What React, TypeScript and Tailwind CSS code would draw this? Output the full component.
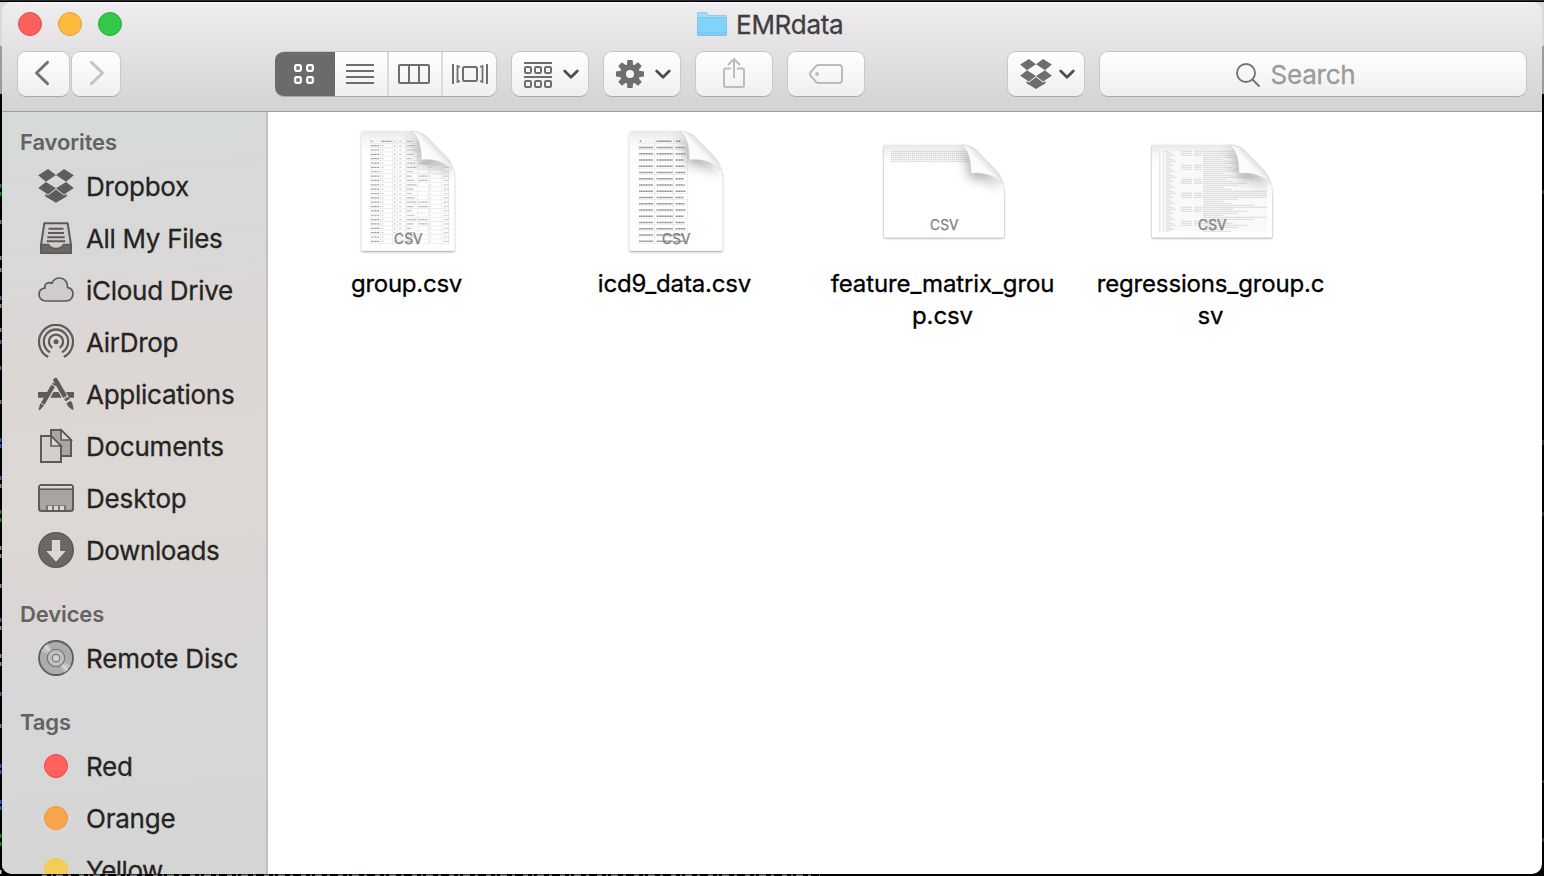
import type { ReactNode } from "react";

const INK = "#5f5a58";

function DropboxGlyph({ size, color }: { size: number; color: string }) {
  return (
    <svg width={size} height={size} viewBox="0 0 36 36" fill={color}>
      <path d="M.2 7.3 10 1l8 6.1-10.1 6.6zM35.8 7.3 26 1l-8 6.1 10.1 6.6zM.2 20.1l7.7-6.2L18 20.3l-8 6.2zM35.8 20.1l-7.7-6.2L18 20.3l8 6.2z" />
      <path d="M18 21.6l8 6 2.7-1.6v2.5L18 34.8 7.300 28.500V26l2.700 1.600z" />
    </svg>
  );
}

function Glyph({ children }: { children: ReactNode }) {
  return (
    <svg width="36" height="36" viewBox="0 0 36 36" fill="none">
      {children}
    </svg>
  );
}

const filesIcon = (
  <Glyph>
    <path d="M6.300 3.300h23.400l3.300 21.700v8H3v-8z" fill="#d0cecd" stroke={INK} strokeWidth="2" strokeLinejoin="round" />
    <path d="M3 24.500h7.500c.7 0 .8 4 7.500 4s6.800-4 7.500-4H33V33H3z" fill="#6d6866" stroke={INK} strokeWidth="1.500" />
    <path d="M10.500 8.800h15M10 13h16M9.300 17.200h17.400M8.700 21.300h18.600" stroke={INK} strokeWidth="2" />
  </Glyph>
);

const cloudIcon = (
  <Glyph>
    <path
      d="M8 29C3.800 29 1 26.200 1 22.500c0-3.600 2.600-6 5.900-6.500C6 12 10.500 9.200 13.700 11.300 15.300 8 18 6 21.300 6c5 0 8.700 4 8.200 9.300C32.800 16 35 18.800 35 22c0 4-2.900 7-7 7z"
      fill="#cfcdcc"
      stroke={INK}
      strokeWidth="1.700"
    />
  </Glyph>
);

const airdropIcon = (
  <Glyph>
    <g stroke={INK} strokeWidth="2.300">
      <path d="M10.200 33A17 17 0 1 1 25.800 33" />
      <path d="M12 28.300A12.200 12.200 0 1 1 24 28.300" />
      <path d="M14.300 23.700A7.100 7.100 0 1 1 21.700 23.700" />
    </g>
    <circle cx="18" cy="17.700" r="2.500" fill={INK} />
  </Glyph>
);

const appsIcon = (
  <Glyph>
    <path d="M0 16h9.500l-3 5.700H0zM15.500 16h5l3.200 5.700H12.300zM28 16h8v5.700h-5z" fill={INK} />
    <path d="M15.200 9.500 4.800 27.700" stroke={INK} strokeWidth="4.200" />
    <path d="M17.500 4.200 26.700 20" stroke={INK} strokeWidth="4.600" strokeLinecap="round" />
    <path d="M15 6.500l3.300 2-1 1.800-3.300-2zM2.300 27.300l3.900 2.300-4.700 4.700-1-.5zM26.300 23.200l4.200-2.500 1.300 2.400-4.100 2.400zM28.500 27.200l4.200-2.400c2.300 2.500 2.600 6 2.800 9.500-3-1.700-5.800-3.500-7-7.100z" fill={INK} />
    <path d="M13.300 8.300l4 2.300M25.300 22.200l5-3M27.300 26.300l5-3" stroke="#dcd7d5" strokeWidth="1" />
  </Glyph>
);

const docsIcon = (
  <Glyph>
    <path d="M13 2h10l10 10v16H13z" fill="#aaa6a4" stroke={INK} strokeWidth="2" />
    <path d="M23 2v10h10z" fill="#dcd7d5" stroke={INK} strokeWidth="1.700" />
    <path d="M3 8h10l10 10v16H3z" fill="#d2cfcd" stroke={INK} strokeWidth="2" />
    <path d="M13 8v10h10z" fill="#dcd7d5" stroke={INK} strokeWidth="1.700" />
  </Glyph>
);

const desktopIcon = (
  <Glyph>
    <rect x="1" y="5" width="34" height="26" rx="2.500" fill="#a8a4a2" stroke={INK} strokeWidth="2" />
    <path d="M2 6h32v2.500H2z" fill="#dcd7d5" />
    <path d="M1 9.300h34" stroke={INK} strokeWidth="1.600" />
    <path d="M8 25.300h20V31H8z" fill={INK} opacity=".65" />
    <path d="M10 26h4v4h-4zM16 26h4v4h-4zM22 26h4v4h-4z" fill="#dcd7d5" />
    <path d="M3 31h30" stroke={INK} strokeWidth="2" />
  </Glyph>
);

const downloadsIcon = (
  <Glyph>
    <circle cx="18" cy="18" r="17.200" fill="#6c6765" stroke={INK} strokeWidth="1.600" />
    <path d="M13.300 7.500h9.400v11h6L18 30.300 7.300 18.500h6z" fill="#dcd7d5" stroke="#55504e" strokeWidth=".8" />
  </Glyph>
);

const discIcon = (
  <Glyph>
    <circle cx="18" cy="18" r="17" fill="#acacab" stroke="#5e5e5d" strokeWidth="1.800" />
    <path d="M18 18 3 10.500 10 3.200zM18 18l15 7.500-6.500 7.300z" fill="#c2c2c1" />
    <path d="M18 18 5.800 7 8 4.800zM18 18l12.500 11-2 2z" fill="#d6d6d5" />
    <circle cx="18" cy="18" r="8.700" fill="#bfbfbe" stroke="#777" strokeWidth="1.200" />
    <circle cx="18" cy="18" r="3.700" fill="#d2d2d1" stroke="#777" strokeWidth="1.200" />
  </Glyph>
);

function Row({ icon, label, spacing = "tracking-[-0.240px]" }: { icon: ReactNode; label: string; spacing?: string }) {
  return (
    <li className="flex h-[52px] shrink-0 items-center pl-9">
      <span className="flex w-9 justify-center">{icon}</span>
      <span
        className={`ml-3 pt-px text-[26px] leading-8 whitespace-nowrap text-[#262423] [-webkit-text-stroke:0.300px_#262423] ${spacing}`}
      >
        {label}
      </span>
    </li>
  );
}

function Heading({ children, className }: { children: string; className: string }) {
  return (
    <h2
      className={`flex shrink-0 items-end pb-0.5 pl-[18px] text-[22px] leading-8 font-semibold tracking-[-0.120px] text-[#636161] ${className}`}
    >
      {children}
    </h2>
  );
}

function TagDot({ className }: { className: string }) {
  return <span className={`size-6 rounded-full border-[1.500px] ${className}`} />;
}

const BUTTON =
  "flex h-[46px] shrink-0 items-center justify-center rounded-[9px] border border-[#c9c7c9] border-b-[#a9a7a9] bg-linear-to-b from-white to-[#f0eff0]";

function Chevron() {
  return (
    <svg width="16" height="12" viewBox="0 0 16 12" fill="none" stroke="#4d4d4d" strokeWidth="2.700" strokeLinecap="round" strokeLinejoin="round">
      <path d="M1.700 3 8 9.300 14.300 3" />
    </svg>
  );
}

function Toolbar() {
  return (
    <header className="h-[110px] shrink-0 border-b-[1.500px] border-[#9f9d9f] bg-linear-to-b from-[#efedef] to-[#d4d2d4] shadow-[inset_0_1px_0_#fafafa]">
      <div className="flex h-[49px] items-center pb-[5px]">
        <div className="flex w-[695px] gap-4 pl-4">
          <span className="size-6 rounded-full border border-[#e24b48] bg-[#fc605c]" />
          <span className="size-6 rounded-full border border-[#dfa035] bg-[#fdbc40]" />
          <span className="size-6 rounded-full border border-[#27a93a] bg-[#34c84a]" />
        </div>
        <svg width="30" height="26" viewBox="0 0 30 26" className="shrink-0">
          <path d="M0 3q0-2 2-2h7.500l2.500 3h16q2 0 2 2v17q0 2-2 2H2q-2 0-2-2z" fill="#76bfe3" />
          <path d="M.500 3q0-1.500 1.500-1.500h7.300l2.500 3H28q1.500 0 1.500 1.500v3H.500z" fill="#a4dcf6" />
          <path d="M.500 7h29v16q0 1-1.500 1H2q-1.500 0-1.500-1z" fill="#82d3fa" />
          <path d="M.500 6.500h29M.500 22h29" stroke="#6ebfe8" strokeWidth=".8" />
        </svg>
        <h1 className="pt-px pl-[9px] text-[26px] leading-8 tracking-[-0.250px] whitespace-nowrap text-[#3f3d3f] [-webkit-text-stroke:0.300px_#3f3d3f]">
          EMRdata
        </h1>
      </div>
      <div className="flex pl-[15px]">
        <div className="flex gap-px">
          <button className={`${BUTTON} w-[53px] pr-1`}>
            <svg width="16" height="26" viewBox="0 0 16 26" fill="none" stroke="#737373" strokeWidth="3" strokeLinecap="round" strokeLinejoin="round" className="-mt-0.5">
              <path d="M13.500 2.300 2.500 13l11 10.700" />
            </svg>
          </button>
          <button className={`${BUTTON} w-[50px] pl-0.5`}>
            <svg width="16" height="26" viewBox="0 0 16 26" fill="none" stroke="#c4c4c4" strokeWidth="3" strokeLinecap="round" strokeLinejoin="round" className="-mt-0.5">
              <path d="M2.500 2.300l11 10.700-11 10.700" />
            </svg>
          </button>
        </div>
        <div className={`${BUTTON} relative ml-[154px] w-[222px] justify-start overflow-hidden border-l-0`}>
          <span className="-my-px flex h-[46px] w-[60px] shrink-0 items-center justify-center bg-[#6b6b6b] pr-0.5">
            <svg width="22" height="22" viewBox="0 0 22 22" fill="none" stroke="#fff" strokeWidth="2.300">
              <rect x="2.200" y="2.200" width="5.600" height="5.600" rx="1.200" />
              <rect x="14.200" y="2.200" width="5.600" height="5.600" rx="1.200" />
              <rect x="2.200" y="14.200" width="5.600" height="5.600" rx="1.200" />
              <rect x="14.200" y="14.200" width="5.600" height="5.600" rx="1.200" />
            </svg>
          </span>
          <span className="flex h-full w-[52px] shrink-0 items-center justify-center pr-0.5">
            <svg width="28" height="22" viewBox="0 0 28 22" stroke="#6e6e6e" strokeWidth="2">
              <path d="M0 2h28M0 8h28M0 14h28M0 20h28" />
            </svg>
          </span>
          <span className="flex h-full w-[54px] shrink-0 items-center justify-center border-l-2 border-[#dcdbdc] pr-0.5">
            <svg width="32" height="22" viewBox="0 0 32 22" fill="none" stroke="#6e6e6e" strokeWidth="2">
              <rect x="1" y="2" width="30" height="18" rx="1" />
              <path d="M11 2v18M21 2v18" />
            </svg>
          </span>
          <span className="flex h-full w-[55px] shrink-0 items-center justify-center border-l-2 border-[#dcdbdc]">
            <svg width="36" height="22" viewBox="0 0 36 22" fill="none" stroke="#6e6e6e" strokeWidth="2">
              <rect x="11" y="4" width="14" height="14" rx="1.500" />
              <path d="M1 1v20M35 1v20" />
              <path d="M8 4 5.500 3v16L8 18M28 4l2.500-1v16L28 18" strokeWidth="1.800" />
            </svg>
          </span>
        </div>
        <button className={`${BUTTON} ml-3.5 w-[78px] gap-[11px] pl-0.5`}>
          <svg width="28" height="28" viewBox="0 0 28 28" fill="none" stroke="#6e6e6e" strokeWidth="2" className="mt-0.5">
            <path d="M0 2h28M0 16h28" />
            <rect x="1" y="6" width="6" height="6" rx="1.200" />
            <rect x="11" y="6" width="6" height="6" rx="1.200" />
            <rect x="21" y="6" width="6" height="6" rx="1.200" />
            <rect x="1" y="20" width="6" height="6" rx="1.200" />
            <rect x="11" y="20" width="6" height="6" rx="1.200" />
            <rect x="21" y="20" width="6" height="6" rx="1.200" />
          </svg>
          <Chevron />
        </button>
        <button className={`${BUTTON} ml-3.5 w-[78px] gap-[11px] pl-0.5`}>
          <svg width="28" height="28" viewBox="-14 -14 28 28">
            <g fill="#6e6e6e">
              {[0, 45, 90, 135].map((a) => (
                <path key={a} d="M-2.600-14h5.200l.6 5V9l-.6 5h-5.200l-.6-5V-9z" transform={`rotate(${a})`} />
              ))}
              <circle r="9.800" />
            </g>
            <circle r="4" fill="#f8f8f8" />
          </svg>
          <Chevron />
        </button>
        <button className={`${BUTTON} ml-3.5 w-[78px]`}>
          <svg width="24" height="32" viewBox="0 0 24 32" fill="none" stroke="#bdbcbd" strokeWidth="2" className="-mt-0.5">
            <path d="M9 11.500H3.500Q2 11.500 2 13v15.500Q2 30 3.500 30h17q1.500 0 1.500-1.500V13q0-1.500-1.500-1.500H15M12 21V2.500M6 8l6-6 6 6" />
          </svg>
        </button>
        <button className={`${BUTTON} ml-3.5 w-[78px]`}>
          <svg width="36" height="22" viewBox="0 0 36 22" fill="none" stroke="#bdbcbd" strokeWidth="2">
            <path d="M10.500 2H31q3 0 3 3v12q0 3-3 3H10.500Q9 20 8 19L2.500 12.500Q1.200 11 2.500 9.500L8 3Q9 2 10.500 2z" />
            <circle cx="9" cy="11" r="2" fill="#bdbcbd" stroke="none" />
          </svg>
        </button>
        <button className={`${BUTTON} ml-[142px] w-[78px] gap-[7px] pl-0.5`}>
          <DropboxGlyph size={32} color="#6e6e6e" />
          <Chevron />
        </button>
        <div className={`${BUTTON} ml-3.5 w-[428px] gap-2.5 pt-0.5 pr-[36px]`}>
          <svg width="26" height="26" viewBox="0 0 26 26" fill="none" stroke="#737373" strokeWidth="1.900" strokeLinecap="round">
            <circle cx="11" cy="11" r="9" />
            <path d="M17.500 17.500 24 24" />
          </svg>
          <span className="text-[26px] leading-8 tracking-[-0.250px] text-[#9b9b9b] [-webkit-text-stroke:0.300px_#9b9b9b]">Search</span>
        </div>
      </div>
    </header>
  );
}

type Preview = "group" | "icd" | "matrix" | "regressions";

function TableLines({ kind }: { kind: Preview }) {
  if (kind === "matrix") {
    return (
      <g stroke="#c4c4c4" strokeWidth="1" strokeDasharray="1.200 .9">
        {[7, 9, 11, 13, 15, 17].map((y) => (
          <path key={y} d={`M7 ${y}H92`} />
        ))}
      </g>
    );
  }
  if (kind === "regressions") {
    const rows = Array.from({ length: 41 }, (_, i) => i);
    return (
      <g>
        <path d="M7 7h108v80H7z" fill="#f9f9f9" />
        <g stroke="#d2d2d2" strokeWidth=".8">
          {rows.map((i) => {
            const y = 7 + i * 2;
            const full = i < 4 || (i > 19 && i < 24) || i === 28 || i === 33;
            const len = full ? 64 : [24, 30, 44, 35, 20, 28, 51][i % 7];
            return (
              <g key={i}>
                <path d={`M7 ${y}h1.500M11 ${y}h1.500M14 ${y}h${3 + ((i * 3) % 8)}`} />
                {i % 7 < 3 && <path d={`M29 ${y}h11M42 ${y}h8`} />}
                <path d={`M51 ${y}h${len}`} />
              </g>
            );
          })}
        </g>
      </g>
    );
  }
  const group = kind === "group";
  const step = group ? 4.35 : 6.25;
  const rows = Array.from({ length: group ? 24 : 17 }, (_, i) => i);
  const right = group ? 87 : 58;
  const verticals = group ? [19, 31, 36, 44, 56, 67, 80, 87] : [25, 44, 58];
  return (
    <g>
      <g stroke="#dcdcdc" strokeWidth=".5">
        {rows.map((i) => (
          <path key={i} d={`M8 ${12.500 + i * step}H${right}`} />
        ))}
        {verticals.map((x) => (
          <path key={x} d={`M${x} 8V114`} />
        ))}
      </g>
      <g stroke="#555" strokeWidth={group ? 1.2 : 1.6} strokeDasharray={group ? "1.100 .35" : "1.300 .35"} opacity={group ? 0.6 : 0.68}>
        {rows.map((i) => {
          const y = 10.5 + i * step;
          if (group) {
            return (
              <g key={i}>
                <path d={i ? `M9 ${y}h9` : `M9 ${y}h2M20 ${y}h10`} />
                <path d={`M20.500 ${y}h1.200M32.500 ${y}h1.200M38 ${y}h1.500M45 ${y}h${[5, 8, 10, 7][i % 4]}`} opacity=".8" />
                {[5, 8, 9, 14, 15, 18, 19].includes(i) && <path d={`M57 ${y}h9`} opacity=".8" />}
                {i > 4 && <path d={`M68 ${y}h1.500M82 ${y}h5`} opacity=".6" />}
              </g>
            );
          }
          return <path key={i} d={i ? `M9.500 ${y}h14M27 ${y}h16M46 ${y}h${8 + (i % 3)}` : `M10 ${y}h2M27 ${y}h15M46 ${y}h5`} />;
        })}
      </g>
    </g>
  );
}

function FileIcon({ kind }: { kind: Preview }) {
  const tall = kind === "group" || kind === "icd";
  const w = tall ? 92.7 : 120;
  const h = tall ? 120 : 93;
  const dx = w - 93;
  const page = `M0 .5H${dx + 48}Q${dx + 59} .5 ${dx + 65} 6L${dx + 84} 25.500Q${dx + 93} 35 ${dx + 93} 50V${h}H0z`;
  const flap = `M${dx + 50} .5Q${dx + 60} 6 ${dx + 60} 29Q${dx + 79} 27 ${dx + 91} 39Q${dx + 89} 30 ${dx + 84} 25.500L${dx + 65} 6Q${dx + 59} .5 ${dx + 50} .5z`;
  return (
    <svg width="132" height="132" viewBox="-6 -6 132 132">
      <defs>
        <linearGradient id={`top-${kind}`} x1="0" y1="0" x2="0" y2="26" gradientUnits="userSpaceOnUse">
          <stop offset="0" stopColor="#e2e2e2" stopOpacity=".8" />
          <stop offset="1" stopColor="#fff" stopOpacity="0" />
        </linearGradient>
        <linearGradient id={`flap-${kind}`} x1={dx + 58} y1="31" x2={dx + 75} y2="15" gradientUnits="userSpaceOnUse">
          <stop offset="0" stopColor="#fff" />
          <stop offset=".7" stopColor="#fafafa" />
          <stop offset="1" stopColor="#dedede" />
        </linearGradient>
        <clipPath id={`page-${kind}`}>
          <path d={page} />
        </clipPath>
        <filter id={`soft-${kind}`} x="-80%" y="-80%" width="260%" height="260%">
          <feGaussianBlur stdDeviation="6" />
        </filter>
        <filter id={`drop-${kind}`} x="-10%" y="-10%" width="120%" height="120%">
          <feDropShadow dx="0" dy="1" stdDeviation="1.300" floodColor="#000" floodOpacity=".42" />
        </filter>
      </defs>
      <g transform={`translate(${60 - w / 2} ${59.8 - h / 2})`}>
        <path d={page} fill="#fff" filter={`url(#drop-${kind})`} />
        <g clipPath={`url(#page-${kind})`}>
          <path d={`M0 0H${w}V40H0z`} fill={`url(#top-${kind})`} />
          <TableLines kind={kind} />
          <path d={flap} transform="translate(-2 5)" fill="#8c8c8c" opacity=".75" filter={`url(#soft-${kind})`} />
        </g>
        <path d={flap} fill={`url(#flap-${kind})`} stroke="#cdcdcd" strokeWidth=".6" />
        <text x={w / 2 + 0.3} y={h - 7} textAnchor="middle" fontSize="13.800" fill="#808080" stroke="#808080" strokeWidth=".25">
          CSV
        </text>
      </g>
    </svg>
  );
}

const files: { kind: Preview; lines: string[]; spacing: string }[] = [
  { kind: "group", lines: ["group.csv"], spacing: "tracking-[-0.250px]" },
  { kind: "icd", lines: ["icd9_data.csv"], spacing: "tracking-[-0.150px]" },
  { kind: "matrix", lines: ["feature_matrix_grou", "p.csv"], spacing: "tracking-[-0.120px]" },
  { kind: "regressions", lines: ["regressions_group.c", "sv"], spacing: "tracking-[-0.150px]" },
];

const edgeMarks: [number, string][] = [
  [184, "#168a16"], [192, "#168a16"], [220, "#777"], [256, "#889"], [268, "#889"], [296, "#4560a0"], [304, "#889"],
  [328, "#889"], [340, "#4560a0"], [366, "#4560a0"], [400, "#777"], [438, "#2d5db0"], [444, "#2d5db0"], [476, "#4560a0"],
  [484, "#889"], [510, "#168a16"], [518, "#168a16"], [546, "#889"], [554, "#889"], [584, "#889"], [618, "#4560a0"],
  [626, "#889"], [654, "#889"], [662, "#889"], [692, "#4560a0"], [724, "#777"], [764, "#2d5db0"], [770, "#2d5db0"],
  [800, "#2d5db0"], [806, "#2d5db0"], [834, "#168a16"], [842, "#168a16"], [870, "#ccc"],
];

export default function App() {
  return (
    <div className="relative flex h-[876px] w-[1544px] flex-col overflow-hidden bg-black px-0.5 pt-0.5 font-[Inter,'Liberation_Sans',sans-serif]">
      <svg className="absolute inset-0" width="1544" height="876">
        <path d="M0 0h1544v1H0z" fill="#2a2a30" />
        <path d="M0 2h12v44H0zM1532 2h12v44h-12z" fill="#d9d9d9" />
        <path d="M0 46h2v48H0zM1542 46h2v48h-2z" fill="#9b9b9b" />
        {edgeMarks.map(([y, c]) => (
          <rect key={y} x="0" y={y} width="1.500" height="4" fill={c} />
        ))}
        <path d="M42 875.200H820" stroke="#777b76" strokeWidth="1.500" strokeDasharray="5 4 2 3 7 5 3 8" />
        <path d="M1543 190v4M1543 440v5M1543 512v4M1543 780v3M1543 838v4" stroke="#555" strokeWidth="1" />
      </svg>
      <main className="relative flex h-[872px] flex-col overflow-hidden rounded-[10px] bg-white">
        <Toolbar />
        <div className="flex min-h-0 flex-1">
          <aside className="w-[266px] shrink-0 overflow-hidden border-r-2 border-[#c1bfbe] bg-[linear-gradient(175deg,#d5dad9_0%,#d9d8d8_18%,#dcd6d5_30%,#dcd8d5_50%,#dbd6d5_64%,#d6d7d7_78%,#d5d6d4_100%)]">
            <Heading className="h-12">Favorites</Heading>
            <ul>
              <Row icon={<DropboxGlyph size={36} color="#5c5d5c" />} label="Dropbox" />
              <Row icon={filesIcon} label="All My Files" spacing="tracking-[-0.320px]" />
              <Row icon={cloudIcon} label="iCloud Drive" spacing="tracking-[-0.280px]" />
              <Row icon={airdropIcon} label="AirDrop" spacing="tracking-[-0.300px]" />
              <Row icon={appsIcon} label="Applications" spacing="tracking-[-0.260px]" />
              <Row icon={docsIcon} label="Documents" />
              <Row icon={desktopIcon} label="Desktop" spacing="tracking-[-0.150px]" />
              <Row icon={downloadsIcon} label="Downloads" spacing="tracking-[-0.400px]" />
            </ul>
            <Heading className="h-14">Devices</Heading>
            <ul>
              <Row icon={discIcon} label="Remote Disc" spacing="tracking-[-0.180px]" />
            </ul>
            <Heading className="h-14">Tags</Heading>
            <ul>
              <Row icon={<TagDot className="border-[#fc403d] bg-[#ff625f]" />} label="Red" />
              <Row icon={<TagDot className="border-[#fb9527] bg-[#f8a54e]" />} label="Orange" />
              <Row icon={<TagDot className="border-[#fbc92f] bg-[#f4cf57]" />} label="Yellow" spacing="tracking-[-0.500px]" />
            </ul>
          </aside>
          <section className="grid grid-cols-[repeat(4,268px)] content-start pt-[13px] pl-1.5">
            {files.map((f) => (
              <figure key={f.kind} className="flex flex-col items-center">
                <FileIcon kind={f.kind} />
                <figcaption
                  className={`mt-[11px] -ml-[3px] text-center text-[24px] leading-8 whitespace-nowrap text-black [-webkit-text-stroke:0.300px_#000] ${f.spacing}`}
                >
                  {f.lines.map((l) => (
                    <span key={l} className="block">
                      {l}
                    </span>
                  ))}
                </figcaption>
              </figure>
            ))}
          </section>
        </div>
      </main>
    </div>
  );
}
